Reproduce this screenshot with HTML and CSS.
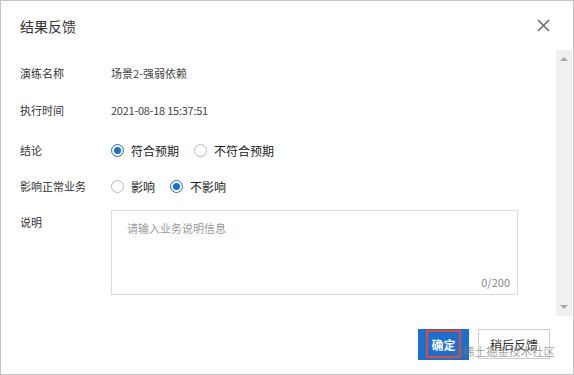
FILE: index.html
```html
<!DOCTYPE html>
<html lang="zh-CN">
<head>
    <meta charset="UTF-8">
    <meta name="viewport" content="width=device-width, initial-scale=1.0">
    <title>结果反馈</title>

    <link rel="stylesheet" href="styles.css">
</head>
<body>

<div class="dialog">
    <div class="dlg-head">
        <span class="dlg-title">结果反馈</span>
        <span class="dlg-close">
            <svg width="13" height="13" viewBox="0 0 13 13">
                <path d="M1 1 L12 12 M12 1 L1 12" stroke="#6b6b6b" stroke-width="1.6" fill="none"/>
            </svg>
        </span>
    </div>

    <div class="dlg-main">
        <div class="form">
            <div class="row row-1">
                <span class="label">演练名称</span>
                <span class="value">场景2-强弱依赖</span>
            </div>
            <div class="row row-2">
                <span class="label">执行时间</span>
                <span class="value date">2021-08-18 15:37:51</span>
            </div>
            <div class="row row-3">
                <span class="label">结论</span>
                <span class="radios">
                    <span class="radio checked"><i></i>符合预期</span>
                    <span class="radio"><i></i>不符合预期</span>
                </span>
            </div>
            <div class="row row-4">
                <span class="label">影响正常业务</span>
                <span class="radios">
                    <span class="radio"><i></i>影响</span>
                    <span class="radio checked"><i></i>不影响</span>
                </span>
            </div>
            <div class="row row-5">
                <span class="label">说明</span>
                <div class="textbox">
                    <span class="placeholder">请输入业务说明信息</span>
                    <span class="count">0/200</span>
                </div>
            </div>
        </div>

        <!-- 假滚动条 -->
        <div class="scroll">
            <span class="arr up"></span>
            <span class="arr down"></span>
        </div>
    </div>

    <div class="dlg-foot">
        <button class="btn btn-primary"><span class="mark">确定</span></button>
        <button class="btn">稍后反馈</button>
        <span class="watermark">@稀土掘金技术社区</span>
    </div>
</div>

</body>
</html>
```

FILE: styles.css
```css
body {
    margin: 0;
    background-color: #ffffff;
    font-family: "Noto Sans CJK SC", "Liberation Sans", sans-serif;
    color: #333333;
}

.dialog {
    width: 574px;
    height: 375px;
    box-sizing: border-box;
    border: 1px solid #c4c4c4;
    display: flex;
    flex-direction: column;
}

.dlg-head {
    height: 49px;
    display: flex;
    align-items: center;
    justify-content: space-between;
    padding: 0 23px 0 19px;
}

.dlg-title {
    font-size: 14px;
    color: #333333;
}

.dlg-close {
    display: flex;
}

.dlg-main {
    height: 266px;
    display: flex;
}

.form {
    flex: 1;
    padding-left: 19px;
}

.row {
    display: flex;
    align-items: center;
    height: 20px;
    font-size: 11px;
}

.row-1 { margin-top: 13px; }
.row-2 { margin-top: 17px; }
.row-3 { margin-top: 20px; }
.row-4 { margin-top: 16px; }
.row-5 {
    margin-top: 14px;
    align-items: flex-start;
    height: auto;
}

.label {
    width: 91px;
    flex-shrink: 0;
    color: #333333;
}

.row-5 .label {
    padding-top: 4px;
}

.value {
    color: #444444;
}

.date {
    letter-spacing: -0.25px;
}

.radios {
    display: flex;
    gap: 15px;
}

.radio {
    display: flex;
    align-items: center;
    gap: 7px;
    color: #222222;
    font-size: 12px;
}

.radio i {
    width: 13px;
    height: 13px;
    box-sizing: border-box;
    border: 1px solid #b8b8b8;
    border-radius: 50%;
    display: flex;
    align-items: center;
    justify-content: center;
}

.radio.checked i {
    border-color: #1a6fd6;
}

.radio.checked i::after {
    content: "";
    width: 7px;
    height: 7px;
    border-radius: 50%;
    background-color: #1a6fd6;
}

.textbox {
    width: 407px;
    height: 85px;
    box-sizing: border-box;
    border: 1px solid #dcdcdc;
    padding: 9px 7px 4px 15px;
    display: flex;
    flex-direction: column;
    justify-content: space-between;
}

.placeholder {
    color: #999999;
    font-size: 11px;
}

.count {
    align-self: flex-end;
    color: #888888;
    font-size: 11px;
}

.scroll {
    width: 16px;
    margin-right: 1px;
    background-color: #f0f0f0;
    display: flex;
    flex-direction: column;
    justify-content: space-between;
    align-items: center;
    padding: 7px 0;
    box-sizing: border-box;
}

.arr {
    width: 0;
    height: 0;
    border-left: 4px solid transparent;
    border-right: 4px solid transparent;
}

.arr.up {
    border-bottom: 4px solid #a8a8a8;
}

.arr.down {
    border-top: 4px solid #a8a8a8;
}

.dlg-foot {
    flex: 1;
    display: flex;
    justify-content: flex-end;
    align-items: center;
    gap: 9px;
    padding: 0 23px 2px 0;
    position: relative;
}

.btn {
    height: 30px;
    min-width: 72px;
    border: 1px solid #cfcfcf;
    background-color: #ffffff;
    color: #333333;
    font-family: "Noto Sans CJK SC", sans-serif;
    font-size: 12px;
    padding: 0 10px;
}

.btn-primary {
    min-width: 51px;
    height: 31px;
    padding: 0;
    border: none;
    background-color: #1a6fd1;
    color: #ffffff;
    font-weight: bold;
    display: flex;
    justify-content: center;
    align-items: center;
}

/* 截图里的红框标注 */
.mark {
    width: 35px;
    height: 28px;
    box-sizing: border-box;
    border: 2px solid #e2492f;
    display: flex;
    align-items: center;
    justify-content: center;
}

.watermark {
    position: absolute;
    right: 18px;
    top: 27px;
    font-size: 11.5px;
    color: rgba(120, 120, 120, 0.7);
    pointer-events: none;
}
```
